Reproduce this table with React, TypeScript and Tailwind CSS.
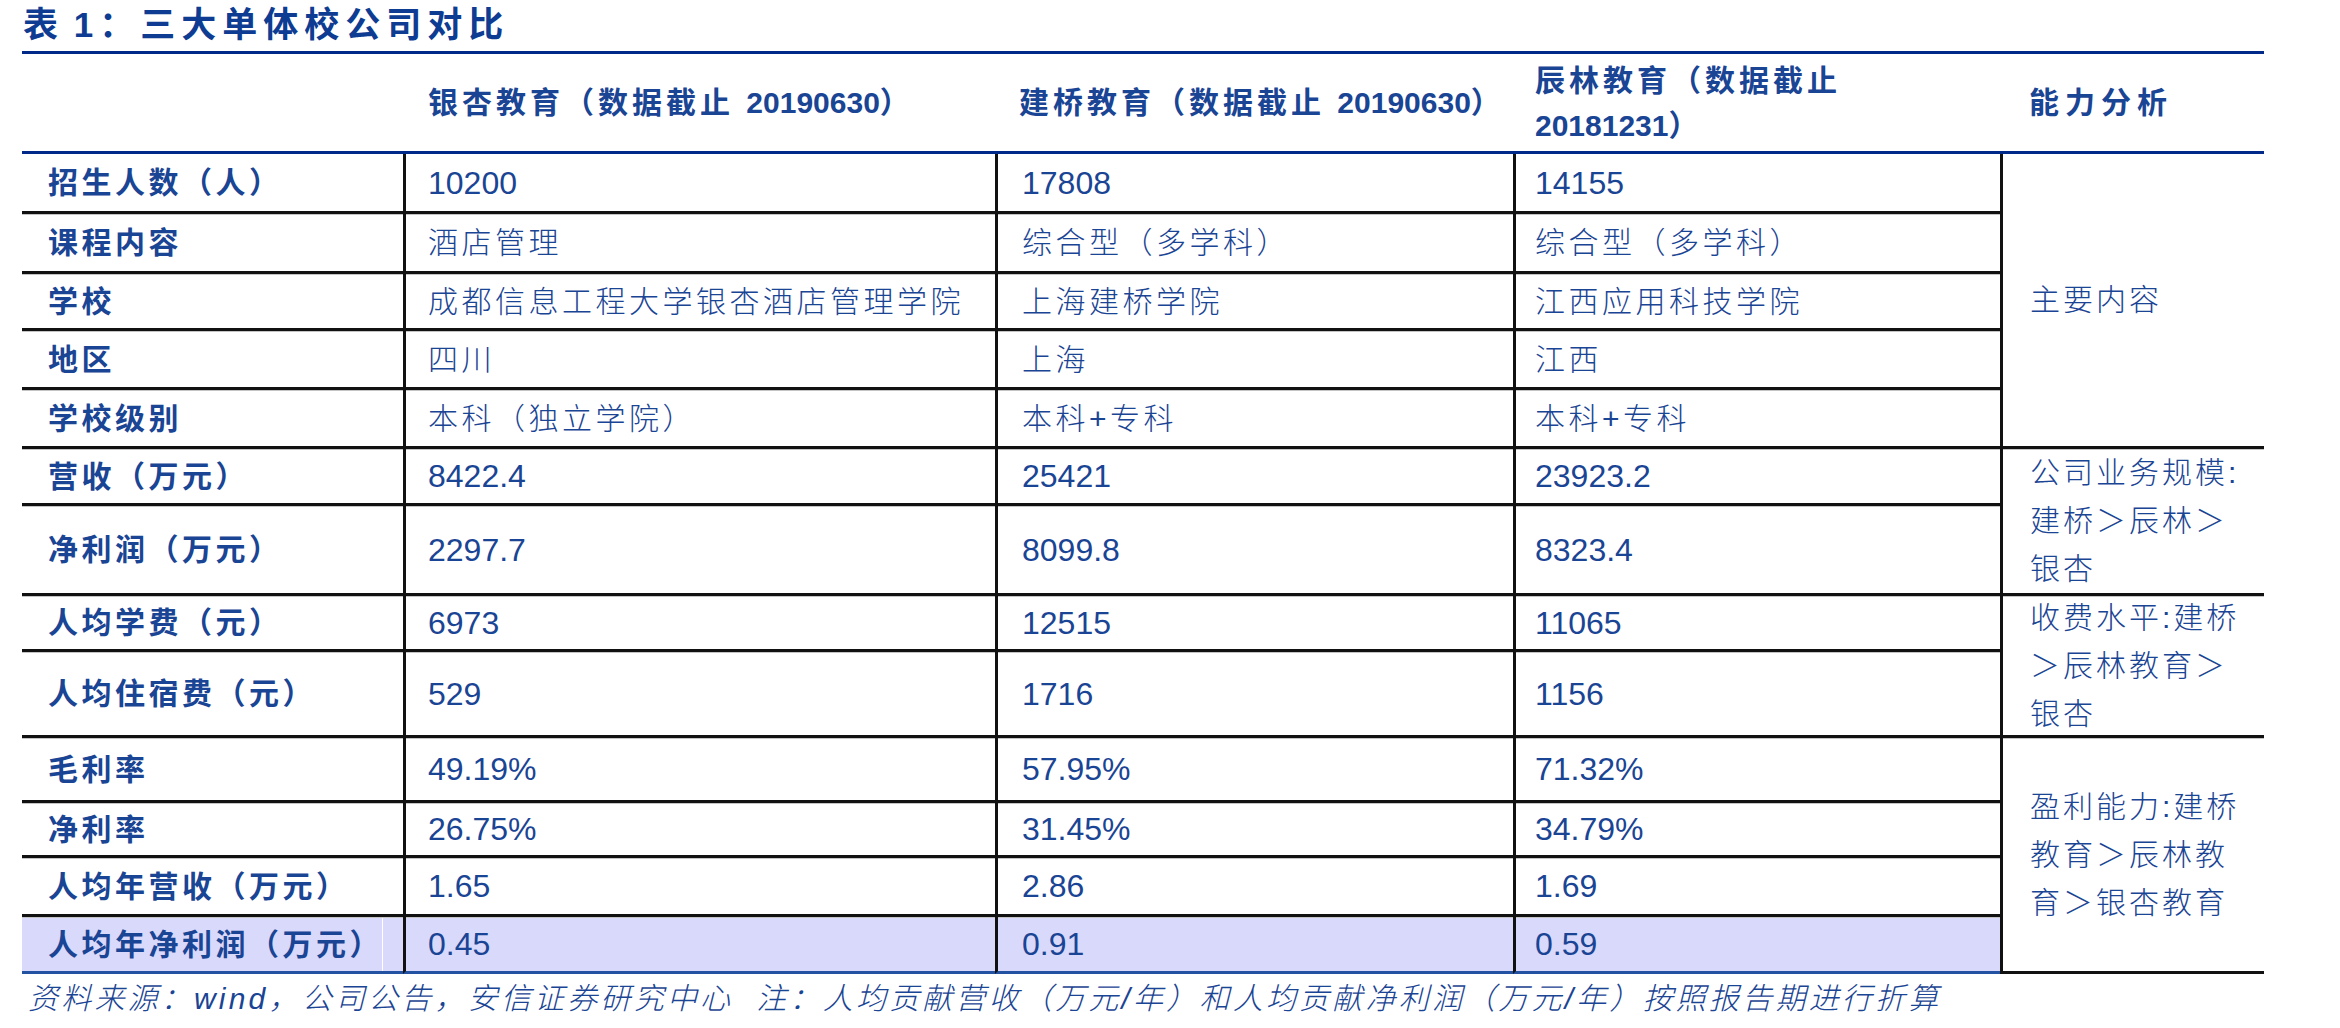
import React from 'react';

const FONT = "font-['Liberation_Sans','Noto_Sans_CJK_SC',sans-serif]";
const TEXT = 'text-[#1a4494]';

type Row = { label: string; values: string[]; cjk?: boolean };

const rows: Row[] = [
  { label: '招生人数（人）', values: ['10200', '17808', '14155'] },
  { label: '课程内容', values: ['酒店管理', '综合型（多学科）', '综合型（多学科）'], cjk: true },
  { label: '学校', values: ['成都信息工程大学银杏酒店管理学院', '上海建桥学院', '江西应用科技学院'], cjk: true },
  { label: '地区', values: ['四川', '上海', '江西'], cjk: true },
  { label: '学校级别', values: ['本科（独立学院）', '本科+专科', '本科+专科'], cjk: true },
  { label: '营收（万元）', values: ['8422.4', '25421', '23923.2'] },
  { label: '净利润（万元）', values: ['2297.7', '8099.8', '8323.4'] },
  { label: '人均学费（元）', values: ['6973', '12515', '11065'] },
  { label: '人均住宿费（元）', values: ['529', '1716', '1156'] },
  { label: '毛利率', values: ['49.19%', '57.95%', '71.32%'] },
  { label: '净利率', values: ['26.75%', '31.45%', '34.79%'] },
  { label: '人均年营收（万元）', values: ['1.65', '2.86', '1.69'] },
  { label: '人均年净利润（万元）', values: ['0.45', '0.91', '0.59'] },
];

// analysis column: which row it starts at, how many rows it spans, its lines
const analysis: { start: number; span: number; lines: string[] }[] = [
  { start: 0, span: 5, lines: ['主要内容'] },
  { start: 5, span: 2, lines: ['公司业务规模:', '建桥＞辰林＞', '银杏'] },
  { start: 7, span: 2, lines: ['收费水平:建桥', '＞辰林教育＞', '银杏'] },
  { start: 9, span: 4, lines: ['盈利能力:建桥', '教育＞辰林教', '育＞银杏教育'] },
];

const spanClass: Record<number, string> = {
  2: 'row-span-2',
  4: 'row-span-4',
  5: 'row-span-5',
};

const valuePad = ['pl-[22px]', 'pl-[24px]', 'pl-[19px]'];

function HeaderCell({ className = '', children }: { className?: string; children?: React.ReactNode }) {
  return (
    <div
      className={`flex items-center border-b-[3px] border-[#00298a] text-[30px] font-bold tracking-[4px] ${TEXT} ${className}`}
    >
      <div>{children}</div>
    </div>
  );
}

export default function App() {
  const last = rows.length - 1;
  return (
    <div className={`w-[2340px] h-[1028px] bg-white pl-[22px] ${FONT}`}>
      <div className="h-[51px] flex items-center pl-px text-[35px] font-bold tracking-[6px] text-[#0d3c92]">
        <div>
          表<span className="tracking-normal"> </span>1：三大单体校公司对比
        </div>
      </div>

      <div className="w-[2242px] grid grid-cols-[381px_592px_518px_487px_264px] grid-rows-[100px_57px_60px_57px_59px_59px_57px_90px_56px_86px_65px_55px_59px_60px] border-t-[3px] border-[#00298a]">
        <HeaderCell />
        <HeaderCell className="pl-[25px]">
          银杏教育（数据截止 <span className="tracking-normal">20190630</span>）
        </HeaderCell>
        <HeaderCell className="pl-[24px]">
          建桥教育（数据截止 <span className="tracking-normal">20190630</span>）
        </HeaderCell>
        <HeaderCell className="pl-[22px] leading-[45px]">
          <div>辰林教育（数据截止</div>
          <div>
            <span className="tracking-normal">20181231</span>）
          </div>
        </HeaderCell>
        <HeaderCell className="pl-[29px] tracking-[6px]">能力分析</HeaderCell>

        {rows.map((row, i) => {
          const top = i > 0 ? 'border-t-[3px] shadow-[inset_0_1px_0_#c4c4c4]' : '';
          const isLast = i === last;
          const bottom = isLast ? 'border-b-[3px] border-b-[#2352a3] bg-[#d9d9fb]' : '';
          const block = analysis.find((a) => a.start === i);
          return (
            <React.Fragment key={row.label}>
              <div
                className={`flex items-center pl-[26px] border-[#111] text-[30px] font-bold tracking-[3.5px] ${TEXT} ${
                  i > 0 ? 'border-t-[3px]' : ''
                } ${
                  isLast
                    ? 'border-b-[3px] border-b-[#2352a3] bg-[#d9d9fb] shadow-[inset_0_1px_0_#c4c4c4,inset_-20px_0_0_#d9d9fb,inset_-21px_0_0_#ffffff]'
                    : i > 0
                    ? 'shadow-[inset_0_1px_0_#c4c4c4]'
                    : ''
                }`}
              >
                {row.label}
              </div>
              {row.values.map((v, j) => (
                <div
                  key={j}
                  className={`flex items-center border-l-[3px] border-[#111] ${valuePad[j]} ${TEXT} ${top} ${bottom} ${
                    row.cjk ? 'text-[30px] font-light tracking-[3.5px]' : 'text-[32px]'
                  }`}
                >
                  {v}
                </div>
              ))}
              {block && (
                <div
                  className={`flex items-center border-l-[3px] border-[#111] pl-[27px] text-[30px] font-light tracking-[3px] leading-[48px] ${TEXT} ${
                    spanClass[block.span]
                  } ${i > 0 ? 'border-t-[3px] shadow-[inset_0_1px_0_#c4c4c4]' : ''} ${
                    block.start + block.span - 1 === last ? 'border-b-[3px]' : ''
                  }`}
                >
                  <div>
                    {block.lines.map((l) => (
                      <div key={l}>{l}</div>
                    ))}
                  </div>
                </div>
              )}
            </React.Fragment>
          );
        })}
      </div>

      <div className={`pt-[5px] pl-[6px] text-[30px] font-light italic tracking-[3.2px] leading-[40px] ${TEXT}`}>
        资料来源：wind，公司公告，安信证券研究中心&nbsp;&nbsp;注：人均贡献营收（万元/年）和人均贡献净利润（万元/年）按照报告期进行折算
      </div>
    </div>
  );
}
